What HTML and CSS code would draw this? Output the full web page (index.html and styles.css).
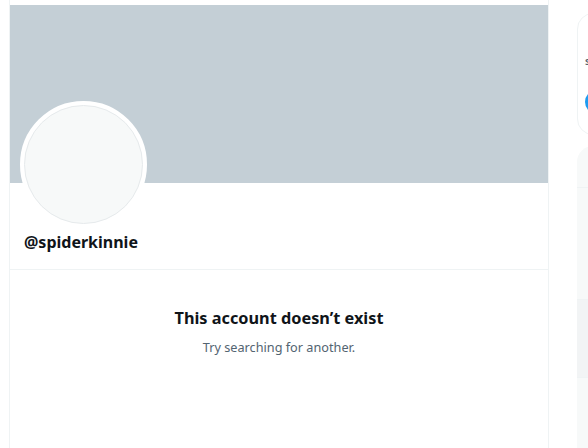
FILE: index.html
```html
<!DOCTYPE html>
<html lang="en">
<head>
<meta charset="utf-8">
<title>@spiderkinnie</title>
<link rel="stylesheet" href="styles.css">
</head>
<body>
<div class="page">
  <main class="column">
    <div class="top-gap"></div>
    <div class="banner"></div>
    <div class="profile">
      <div class="avatar"><div class="avatar-inner"></div></div>
      <div class="handle">@spiderkinnie</div>
    </div>
    <div class="empty">
      <div class="empty-title">This account doesn’t exist</div>
      <div class="empty-sub">Try searching for another.</div>
    </div>
  </main>
  <aside class="sidebar">
    <div class="card">
      <div class="card-title">Subscribe to Premium</div>
      <div class="card-dot"></div>
    </div>
    <div class="panel">
      <div class="panel-head"></div>
      <div class="panel-row tall"></div>
      <div class="panel-row hover"></div>
      <div class="panel-row"></div>
    </div>
  </aside>
</div>
</body>
</html>
```
FILE: styles.css
```css
html, body {
  margin: 0;
  padding: 0;
  background: #ffffff;
  overflow: hidden;
  height: 448px;
}
body {
  font-family: "Segoe UI", "Noto Sans", "Liberation Sans", sans-serif;
  color: #0f1419;
}
.page {
  display: flex;
  align-items: flex-start;
  width: 1000px;
}
.column {
  margin-left: 9px;
  width: 538px;
  border-left: 1px solid #eff3f4;
  border-right: 1px solid #eff3f4;
  min-height: 448px;
  flex: none;
}
.top-gap {
  height: 5px;
}
.banner {
  height: 178px;
  background: #c4cfd6;
}
.profile {
  display: flex;
  flex-direction: column;
  align-items: flex-start;
  padding: 0 10px;
  border-bottom: 1px solid #eff3f4;
  height: 86px;
}
.avatar {
  width: 119px;
  height: 119px;
  margin-top: -82px;
  border-radius: 50%;
  border: 4px solid #ffffff;
  background: #ffffff;
  flex: none;
}
.avatar-inner {
  width: 117px;
  height: 117px;
  border-radius: 50%;
  border: 1px solid #e6eaec;
  background: #f7f9f9;
}
.handle {
  margin-top: 4px;
  margin-left: 4px;
  font-size: 16px;
  font-weight: 700;
  line-height: 20px;
}
.empty {
  display: flex;
  flex-direction: column;
  align-items: center;
  padding-top: 37px;
}
.empty-title {
  font-size: 16.3px;
  font-weight: 700;
  line-height: 22px;
}
.empty-sub {
  margin-top: 10px;
  font-size: 12.7px;
  color: #536471;
  line-height: 16px;
}
.sidebar {
  margin-left: 28px;
  width: 350px;
  flex: none;
}
.card {
  margin-top: 13px;
  height: 122px;
  border: 1px solid #eff3f4;
  border-radius: 16px;
  padding: 0 7px;
  box-sizing: border-box;
}
.card-title {
  margin-top: 42px;
  font-size: 9px;
  font-weight: 700;
  color: #536471;
  line-height: 12px;
}
.card-dot {
  margin-top: 22px;
  width: 24px;
  height: 24px;
  border-radius: 50%;
  background: #1d9bf0;
}
.panel {
  margin-top: 11px;
  background: #f7f9f9;
  border-radius: 16px 16px 0 0;
}
.panel-head {
  height: 41px;
  border-bottom: 1px solid #eff3f4;
}
.panel-row {
  height: 77px;
  border-bottom: 1px solid #eff3f4;
}
.panel-row.tall {
  height: 111px;
}
.panel-row.hover {
  background: #f2f4f5;
}
```
